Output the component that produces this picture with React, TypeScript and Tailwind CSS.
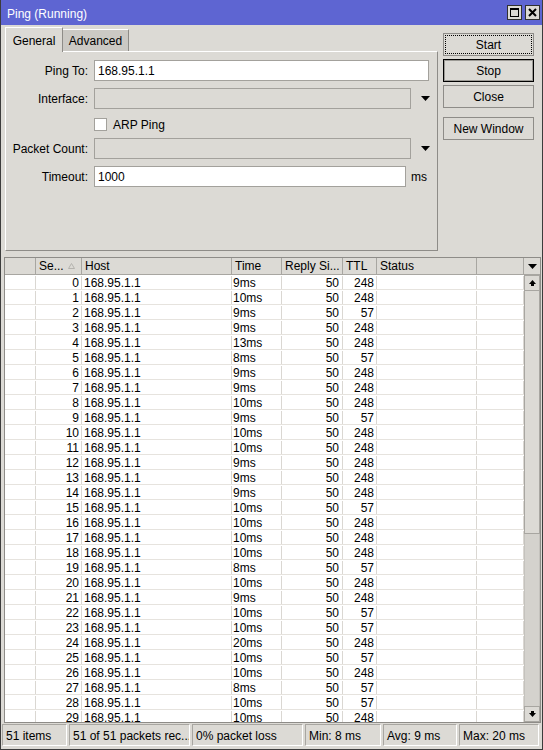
import React from 'react';

const pings: [string, number][] = [
  ['9ms', 248], ['10ms', 248], ['9ms', 57], ['9ms', 248], ['13ms', 248],
  ['8ms', 57], ['9ms', 248], ['9ms', 248], ['10ms', 248], ['9ms', 57],
  ['10ms', 248], ['10ms', 248], ['9ms', 248], ['9ms', 248], ['9ms', 248],
  ['10ms', 57], ['10ms', 248], ['10ms', 248], ['10ms', 248], ['8ms', 57],
  ['10ms', 248], ['9ms', 248], ['10ms', 57], ['10ms', 57], ['20ms', 248],
  ['10ms', 57], ['10ms', 248], ['8ms', 57], ['10ms', 57], ['10ms', 248],
];

function DownTri() {
  return (
    <svg width="9" height="5" viewBox="0 0 9 5">
      <path d="M0 0h9L4.5 5z" fill="#000" />
    </svg>
  );
}

function ScrollArrow({ up }: { up?: boolean }) {
  return (
    <svg width="7" height="6" viewBox="0 0 7 6" className={up ? '' : 'rotate-180'}>
      <path d="M3.5 0L7 4H0z" fill="#000" />
      <rect x="2" y="4" width="3" height="2" fill="#000" />
    </svg>
  );
}

function Label({ children }: { children: React.ReactNode }) {
  return <div className="w-[83px] shrink-0 pr-[1px] text-right text-[#000]">{children}</div>;
}

function Btn({ children, kind }: { children: React.ReactNode; kind?: 'focus' | 'default' }) {
  if (kind === 'default') {
    return (
      <div className="h-[23px] border border-black">
        <div className="flex h-full items-center justify-center border border-[#9c9a95] bg-[#dcdad5]">{children}</div>
      </div>
    );
  }
  return (
    <div className="h-[23px] border border-[#8e8c88] bg-[#dcdad5] p-[1px]">
      <div
        className={
          'flex h-full items-center justify-center border ' +
          (kind === 'focus' ? 'border-dotted border-black' : 'border-transparent')
        }
      >
        {children}
      </div>
    </div>
  );
}

const cols = [31, 46, 150, 50, 61, 34, 100, 47];

export default function App() {
  return (
    <div className="flex h-[750px] w-[543px] flex-col overflow-hidden border-x border-b border-[#3c3c3c] bg-[#dcdad5] font-['Liberation_Sans',Arial,sans-serif] text-[12px] text-black">
      {/* title bar */}
      <div className="flex h-[25px] shrink-0 items-center justify-between bg-[#5e65d2] pl-[6px] pr-[2px] text-white">
        <span className="pt-[2px]">Ping (Running)</span>
        <div className="flex gap-[3px]">
          <div className="flex h-[15px] w-[15px] items-center justify-center border border-[#303030] bg-[#dcdad5]">
            <div className="h-[9px] w-[9px] border border-t-2 border-black" />
          </div>
          <div className="flex h-[15px] w-[15px] items-center justify-center border border-[#303030] bg-[#dcdad5]">
            <svg width="9" height="9" viewBox="0 0 9 9">
              <path d="M1 1l7 7M8 1L1 8" stroke="#000" strokeWidth="2" />
            </svg>
          </div>
        </div>
      </div>

      {/* top form area */}
      <div className="flex h-[232px] shrink-0 pl-[4px]">
        <div className="flex w-[433px] flex-col pt-[2px]">
          <div className="flex h-[24px] items-end">
            <div className="relative z-10 -mb-px flex h-[25px] w-[58px] items-center justify-center border-l border-t border-r border-l-white border-t-white border-r-[#8e8c88] bg-[#dcdad5] pt-[1px]">
              General
            </div>
            <div className="flex h-[22px] w-[66px] items-center justify-center border-t border-r border-t-white border-r-[#8e8c88] bg-[#cbc9c4] pt-[1px]">
              Advanced
            </div>
          </div>
          <div className="h-[200px] border-l border-t border-r border-b border-l-white border-t-white border-r-[#8e8c88] border-b-[#8e8c88] pt-[8px]">
            <div className="flex h-[21px] items-center gap-[5px]">
              <Label>Ping To:</Label>
              <div className="flex h-[21px] w-[335px] items-center border border-[#a3a19c] bg-white pl-[3px]">168.95.1.1</div>
            </div>
            <div className="mt-[7px] flex h-[21px] items-center gap-[5px]">
              <Label>Interface:</Label>
              <div className="h-[21px] w-[317px] border border-[#a3a19c] bg-[#dcdad5]" />
              <div className="ml-[5px]"><DownTri /></div>
            </div>
            <div className="mt-[5px] flex h-[21px] items-center gap-[5px]">
              <div className="w-[83px] shrink-0" />
              <div className="h-[13px] w-[13px] border border-[#a3a19c] bg-white" />
              <span className="ml-[1px]">ARP Ping</span>
            </div>
            <div className="mt-[3px] flex h-[21px] items-center gap-[5px]">
              <Label>Packet Count:</Label>
              <div className="h-[21px] w-[317px] border border-[#a3a19c] bg-[#dcdad5]" />
              <div className="ml-[5px]"><DownTri /></div>
            </div>
            <div className="mt-[7px] flex h-[21px] items-center gap-[5px]">
              <Label>Timeout:</Label>
              <div className="flex h-[21px] w-[312px] items-center border border-[#a3a19c] bg-white pl-[3px]">1000</div>
              <span>ms</span>
            </div>
          </div>
        </div>
        <div className="ml-[5px] flex w-[91px] flex-col pt-[8px]">
          <Btn kind="focus">Start</Btn>
          <div className="mt-[3px]"><Btn kind="default">Stop</Btn></div>
          <div className="mt-[3px]"><Btn>Close</Btn></div>
          <div className="mt-[9px]"><Btn>New Window</Btn></div>
        </div>
      </div>

      {/* table */}
      <div className="ml-[3px] flex h-[466px] w-[537px] shrink-0 flex-col border border-[#8e8c88] bg-white">
        <div className="flex h-[17px] shrink-0 border-b border-[#a8a6a1] bg-[#dcdad5]">
          {['', 'Se...', 'Host', 'Time', 'Reply Si...', 'TTL', 'Status', ''].map((h, i) => (
            <div
              key={i}
              style={{ width: cols[i] }}
              className="relative flex shrink-0 items-center overflow-hidden whitespace-nowrap border-r border-[#a8a6a1] pl-[3px] pt-[1px] leading-[15px]"
            >
              {h}
              {i === 1 && (
                <svg width="7" height="6" viewBox="0 0 7 6" className="absolute left-[32px] top-[5px]">
                  <path d="M3.5 0.5L6.5 5.5H0.5z" fill="none" stroke="#b5b3ae" />
                </svg>
              )}
            </div>
          ))}
          <div className="flex w-[16px] items-center justify-center"><DownTri /></div>
        </div>
        <div className="flex min-h-0 flex-1">
          <div className="w-[519px] overflow-hidden">
            {pings.map(([t, ttl], i) => (
              <div key={i} className="flex h-[15px] border-b border-[#e6e3de] pt-[1px] leading-[14px]">
                <div className="w-[31px] shrink-0 border-r border-[#dad7d2]" />
                <div className="w-[46px] shrink-0 border-r border-[#dad7d2] pr-[2px] text-right">{i}</div>
                <div className="w-[150px] shrink-0 border-r border-[#dad7d2] pl-[2px]">168.95.1.1</div>
                <div className="w-[50px] shrink-0 border-r border-[#dad7d2] pl-[1px]">{t}</div>
                <div className="w-[61px] shrink-0 border-r border-[#dad7d2] pr-[3px] text-right">50</div>
                <div className="w-[34px] shrink-0 border-r border-[#dad7d2] pr-[2px] text-right">{ttl}</div>
                <div className="w-[100px] shrink-0 border-r border-[#dad7d2]" />
                <div className="w-[47px] shrink-0 border-r border-[#dad7d2]" />
              </div>
            ))}
          </div>
          <div className="flex w-[16px] flex-col bg-[#dcdad5]">
            <div className="flex h-[16px] shrink-0 items-center justify-center border border-[#a8a6a1]"><ScrollArrow up /></div>
            <div className="h-[243px] shrink-0 border-x border-b border-[#a8a6a1]" />
            <div className="flex-1 border-x border-[#c4c2bd] bg-[#d4d2cd]" />
            <div className="flex h-[16px] shrink-0 items-center justify-center border border-[#a8a6a1]"><ScrollArrow /></div>
          </div>
        </div>
      </div>

      {/* status bar */}
      <div className="flex flex-1 gap-[2px] pl-[1px] pt-[1px]">
        {[
          ['51 items', 65],
          ['51 of 51 packets rec...', 121],
          ['0% packet loss', 111],
          ['Min: 8 ms', 76],
          ['Avg: 9 ms', 74],
          ['Max: 20 ms', 80],
        ].map(([s, w], i) => (
          <div
            key={i}
            style={{ width: w as number }}
            className="flex h-[22px] items-center overflow-hidden whitespace-nowrap border border-[#a8a6a1] border-b-white border-r-white pl-[3px] pt-[1px]"
          >
            {s}
          </div>
        ))}
      </div>
    </div>
  );
}
